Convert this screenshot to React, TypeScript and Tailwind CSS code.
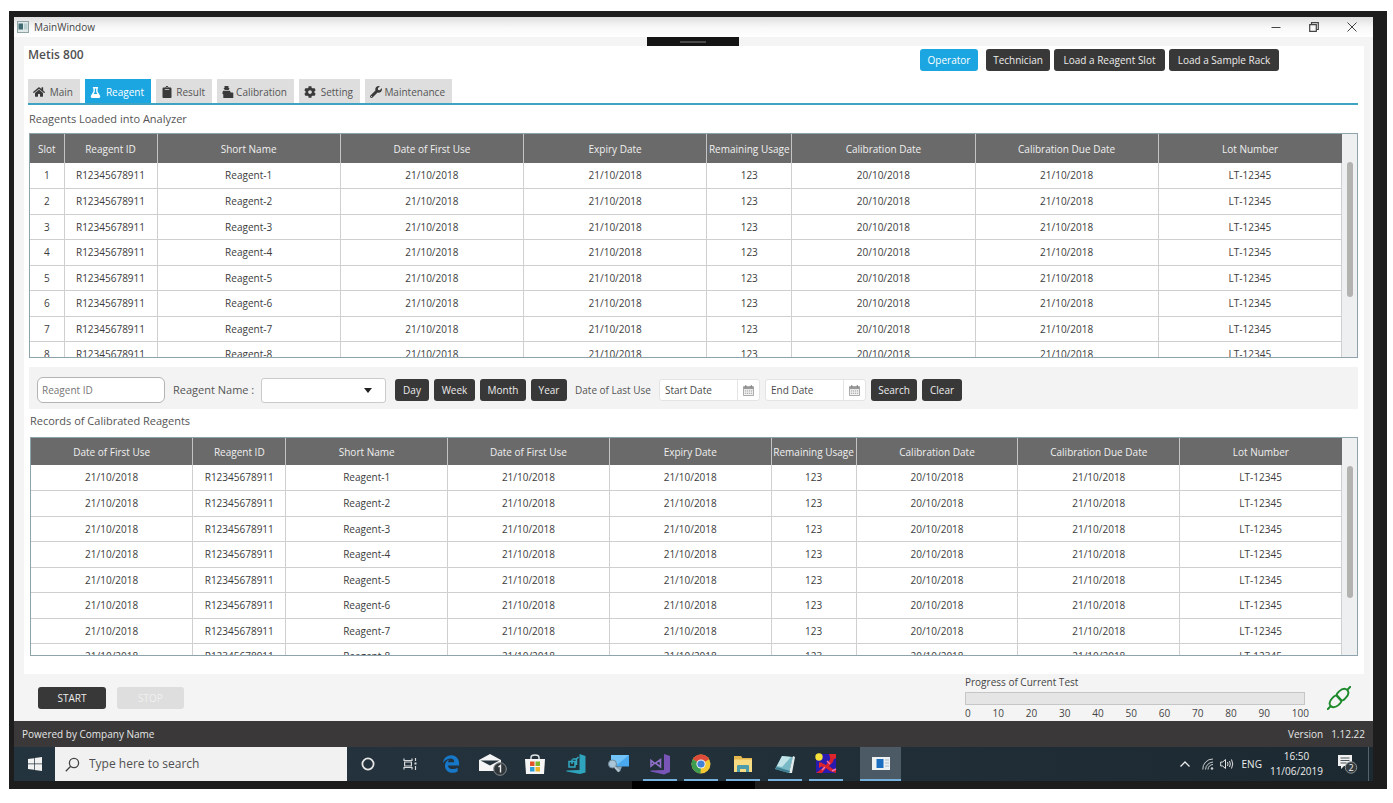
import type { ReactNode } from "react";
import { FaHome, FaFlask, FaClipboard, FaCog, FaWrench } from "react-icons/fa";
import { FaEdgeLegacy } from "react-icons/fa6";

const DARK_BUTTON =
  "flex h-[22px] items-center justify-center whitespace-nowrap rounded-[3px] bg-[#393838] text-[10px] font-medium text-[#ececec]";

const reagents = [1, 2, 3, 4, 5, 6, 7, 8].map((slot) => ({
  slot: String(slot),
  id: "R12345678911",
  name: `Reagent-${slot}`,
  firstUse: "21/10/2018",
  expiry: "21/10/2018",
  usage: "123",
  calibrated: "20/10/2018",
  due: "21/10/2018",
  lot: "LT-12345",
}));

type Column = { label: string; field: keyof (typeof reagents)[number]; width: string };

const commonColumns: Column[] = [
  { label: "Reagent ID", field: "id", width: "w-[93px]" },
  { label: "Short Name", field: "name", width: "w-auto" },
  { label: "Date of First Use", field: "firstUse", width: "w-auto" },
  { label: "Expiry Date", field: "expiry", width: "w-auto" },
  { label: "Remaining Usage", field: "usage", width: "w-[85px]" },
  { label: "Calibration Date", field: "calibrated", width: "w-auto" },
  { label: "Calibration Due Date", field: "due", width: "w-auto" },
  { label: "Lot Number", field: "lot", width: "w-auto" },
];

const loadedColumns: Column[] = [{ label: "Slot", field: "slot", width: "w-[34px]" }, ...commonColumns];
const recordColumns: Column[] = [{ label: "Date of First Use", field: "firstUse", width: "w-auto" }, ...commonColumns];

type GridProps = { columns: Column[]; height: string; headHeight: string; thumb: string; label: string };

function DataGrid({ columns, height, headHeight, thumb, label }: GridProps) {
  return (
    <div className={`flex border border-[#8fa3ad] ${height}`}>
      <div className="min-w-0 flex-1 overflow-y-auto [scrollbar-width:none]">
        <table aria-label={label} className="w-full table-fixed border-collapse text-center text-[10px] text-[#3c3c3c]">
          <colgroup>
            {columns.map((c, i) => (
              <col key={i} className={c.width} />
            ))}
          </colgroup>
          <thead>
            <tr className={`bg-[#6a6a6a] text-[#f0f0f0] ${headHeight}`}>
              {columns.map((c, i) => (
                <th key={i} className="whitespace-nowrap border-r border-[#c4c4c4] p-0 pt-px font-medium last:border-r-0">
                  {c.label}
                </th>
              ))}
            </tr>
          </thead>
          <tbody>
            {reagents.map((r) => (
              <tr key={r.slot} className="border-b border-[#cfcfcf] odd:h-[25px] even:h-[26px]">
                {columns.map((c, i) => (
                  <td key={i} className="border-r border-[#cfcfcf] p-0 pt-px">
                    {r[c.field]}
                  </td>
                ))}
              </tr>
            ))}
          </tbody>
        </table>
      </div>
      <div className="flex w-[15px] justify-center bg-[#eeeff0] pt-7">
        <div className={`w-1.5 rounded-full bg-[#b2b2b0] ${thumb}`} />
      </div>
    </div>
  );
}

function BalanceIcon() {
  return (
    <svg viewBox="0 0 12 14" className="h-3.5 w-3 fill-current">
      <path d="M2.500 1h4v2h1L6.800 5h-4L1.500 3h1z M1 5.800h7l.7 1.700h1.800q.8 0 .8.900V13H1.300V9.500L.3 8.500z" />
    </svg>
  );
}

const tabs: { label: string; icon: ReactNode; width: string }[] = [
  { label: "Main", icon: <FaHome className="size-3" />, width: "w-[52px]" },
  { label: "Reagent", icon: <FaFlask className="size-[11px]" />, width: "w-[66px]" },
  { label: "Result", icon: <FaClipboard className="size-3" />, width: "w-[56px]" },
  { label: "Calibration", icon: <BalanceIcon />, width: "w-[77px]" },
  { label: "Setting", icon: <FaCog className="size-3" />, width: "w-[61px]" },
  { label: "Maintenance", icon: <FaWrench className="size-3" />, width: "w-[87px]" },
];

function DateField({ label }: { label: string }) {
  return (
    <div className="flex h-[22px] w-[101px] rounded-[3px] border border-[#e4e4e4] bg-white">
      <input
        aria-label={label}
        placeholder={label}
        className="w-[78px] border-r border-[#e4e4e4] px-[5px] text-[10px] outline-none placeholder:text-[#4a4a4a]"
      />
      <button aria-label={`Pick ${label}`} className="flex flex-1 items-center justify-center">
        <svg viewBox="0 0 12 12" className="size-[11px]">
          <path d="M.5 2h11v9.500H.5z" fill="#f4f4f4" stroke="#a0a0a0" />
          <path d="M.5 1.500h11v3H.5z" fill="#999" />
          <path d="M3 0v2.500M9 0v2.500" stroke="#777" />
          <path d="M2 6.500h8M2 9h8" stroke="#909090" strokeDasharray="1.400 .8" />
        </svg>
      </button>
    </div>
  );
}

function TitleBar() {
  return (
    <div className="flex h-5 items-center bg-linear-to-b from-[#dedede] via-[#f8f8f8] to-white pl-[3px] pr-4">
      <svg viewBox="0 0 12 12" className="size-3">
        <rect x=".5" y=".5" width="11" height="11" fill="#dfe9ea" stroke="#8fa5a5" />
        <rect x="1.500" y="2.500" width="4.500" height="6" fill="#3f6a72" />
        <rect x="7" y="2.500" width="3.500" height="6" fill="#b9cfd0" />
      </svg>
      <h1 className="ml-[5px] flex-1 text-[10px] font-medium text-[#444]">MainWindow</h1>
      <div className="flex gap-7 text-[#444]">
        <button aria-label="Minimize">
          <svg viewBox="0 0 10 10" className="size-2.5" fill="none" stroke="currentColor">
            <path d="M.5 5.500h9" />
          </svg>
        </button>
        <button aria-label="Restore">
          <svg viewBox="0 0 10 10" className="size-2.5" fill="none" stroke="currentColor" strokeWidth="1.200">
            <path d="M.7 2.700h6.600v6.600H.7zM2.500 2.500V.7h6.800v6.800H7.500" />
          </svg>
        </button>
        <button aria-label="Close">
          <svg viewBox="0 0 10 10" className="size-2.5" fill="none" stroke="currentColor">
            <path d="M.5.5l9 9M9.500.5l-9 9" />
          </svg>
        </button>
      </div>
    </div>
  );
}

function Header() {
  return (
    <header className="flex pt-[3px]">
      <h2 className="flex-1 text-xs leading-3 font-semibold text-[#505050]">Metis 800</h2>
      <div className="mr-[79px] flex gap-1">
        <button className="mr-1 flex h-[22px] w-[58px] items-center justify-center rounded-[3px] bg-[#1ba6e2] text-[10px] font-medium text-white">
          Operator
        </button>
        <button className={`${DARK_BUTTON} w-16`}>Technician</button>
        <button className={`${DARK_BUTTON} w-[111px]`}>Load a Reagent Slot</button>
        <button className={`${DARK_BUTTON} w-[110px]`}>Load a Sample Rack</button>
      </div>
    </header>
  );
}

function Tabs() {
  return (
    <nav className="mt-2 flex gap-[5px] border-b-2 border-[#3fa3c4]">
      {tabs.map((t) => (
        <button
          key={t.label}
          className={`flex h-6 items-center justify-between whitespace-nowrap pt-0.5 pr-[7px] pl-[5px] text-[10px] ${t.width} ${
            t.label === "Reagent" ? "bg-[#1ba6e2] text-white" : "bg-[#dedede] text-[#3a3a3a]"
          }`}
        >
          {t.icon}
          <span className={t.label === "Reagent" ? "text-white" : "text-[#555]"}>{t.label}</span>
        </button>
      ))}
    </nav>
  );
}

function FilterBar() {
  return (
    <div className="mt-[9px] flex h-[42px] items-center bg-[#f3f3f3] pt-1 pl-2">
      <input
        aria-label="Reagent ID"
        placeholder="Reagent ID"
        className="h-[26px] w-32 rounded-md border border-[#b4b4b4] bg-white px-1 text-[10px] outline-none placeholder:text-[#777]"
      />
      <label htmlFor="reagent-name" className="ml-2 w-[88px] whitespace-nowrap text-[11px] text-[#555]">
        Reagent Name :
      </label>
      <div className="relative">
        <select
          id="reagent-name"
          className="block h-[25px] w-[125px] appearance-none rounded-[3px] border border-[#cacaca] bg-white px-2 text-[10px] text-[#444]"
        >
          <option value="" />
          {reagents.map((r) => (
            <option key={r.slot}>{r.name}</option>
          ))}
        </select>
        <svg viewBox="0 0 8 5" className="pointer-events-none absolute top-2.5 right-3.5 h-[5px] w-2">
          <path d="M0 0h8L4 5z" fill="#222" />
        </svg>
      </div>
      <div className="ml-[9px] flex gap-[5px]">
        <button className={`${DARK_BUTTON} w-[34px]`}>Day</button>
        <button className={`${DARK_BUTTON} w-[41px]`}>Week</button>
        <button className={`${DARK_BUTTON} w-[46px]`}>Month</button>
        <button className={`${DARK_BUTTON} w-9`}>Year</button>
      </div>
      <span className="ml-2 w-[84px] whitespace-nowrap text-[10px] text-[#555]">Date of Last Use</span>
      <div className="flex gap-[5px]">
        <DateField label="Start Date" />
        <DateField label="End Date" />
        <button className={`${DARK_BUTTON} w-[46px]`}>Search</button>
        <button className={`${DARK_BUTTON} w-10`}>Clear</button>
      </div>
    </div>
  );
}

function TestControls() {
  return (
    <div className="flex h-[47px] pr-[22px] pl-6">
      <div className="flex flex-1 gap-[11px] pt-[13px]">
        <button className={`${DARK_BUTTON} w-[68px]`}>START</button>
        <button
          disabled
          className="h-[22px] w-[67px] rounded-[3px] bg-[#dedede] text-[10px] font-medium text-[#f0f0f0]"
        >
          STOP
        </button>
      </div>
      <div className="mr-[18px] w-[344px] text-[10px] text-[#444]">
        <div id="progress-label" className="h-[18px] leading-[16px]">
          Progress of Current Test
        </div>
        <div
          role="progressbar"
          aria-labelledby="progress-label"
          aria-valuenow={0}
          className="mr-1 h-[13px] border border-[#c6c6c6] bg-[#e5e5e5]"
        />
        <div className="flex justify-between leading-4">
          {[0, 10, 20, 30, 40, 50, 60, 70, 80, 90, 100].map((n) => (
            <span key={n}>{n}</span>
          ))}
        </div>
      </div>
      <svg viewBox="0 0 24 24" className="mt-3 size-6" fill="none" stroke="#1d8a2c" strokeWidth="1.900">
        <path d="M0 24l3.800-4M20.200 4L24 0" />
        <path d="M5.500 11.800C7.500 9.300 9.500 8.900 10.800 10.200l3 3.400c1 1.400.4 3.200-1.800 5-3 2.700-6.200 3.400-8.200 1.400s-1.200-5.200 1.700-8.200z" />
        <path d="M18.500 12.200c-2 2.500-4 2.900-5.300 1.600l-3-3.400c-1-1.400-.4-3.200 1.800-5 3-2.700 6.200-3.400 8.200-1.400s1.200 5.200-1.700 8.200z" />
      </svg>
    </div>
  );
}

const MailIcon = () => (
  <svg viewBox="0 0 30 24" className="h-6 w-[30px]">
    <path d="M1 8L12 2l11 6v11H1z" fill="#f5f5f5" />
    <path d="M2.500 8.500h19L12 13.500z" fill="#25343c" />
    <circle cx="22" cy="17" r="6.300" fill="#30373a" stroke="#8b8f90" />
    <path d="M20.500 15l2-1.500V20.500" fill="none" stroke="#eee" strokeWidth="1.400" />
  </svg>
);

const StoreIcon = () => (
  <svg viewBox="0 0 22 22" className="size-[22px]">
    <path d="M7 7V4.500q0-2.500 4-2.500t4 2.500V7" fill="none" stroke="#dfe3e4" strokeWidth="1.500" />
    <path d="M1 6h20l-1 15H2z" fill="#f6f6f6" />
    <path d="M6 8.500h4.500V13H6z" fill="#e0532c" />
    <path d="M11.500 8.500H16V13h-4.500z" fill="#7fb52d" />
    <path d="M6 14h4.500v4.500H6z" fill="#2d9fd8" />
    <path d="M11.500 14H16v4.500h-4.500z" fill="#f0b526" />
  </svg>
);

const BlendIcon = () => (
  <svg viewBox="0 0 22 22" className="size-[22px]">
    <path d="M14.500 1l6 2v16.500l-5.500 1.500L1.500 18.500v-1l13-.5z" fill="#2fa5bd" />
    <path d="M4 8.500h6v5.500H4zM7 11V6.500M11.500 12V6h-4M11.500 6l2-2" fill="none" stroke="#32a9c1" strokeWidth="1.500" />
  </svg>
);

const RemoteIcon = () => (
  <svg viewBox="0 0 22 22" className="size-[22px]">
    <path d="M4 2h18v11.500H4z" fill="#49a8ee" />
    <path d="M4 2h18L8 13.500H4z" fill="#72c3f7" />
    <path d="M10 13.500h5l-2 5h-2z" fill="#8aa7b8" />
    <circle cx="5.500" cy="11" r="4" fill="#a9c6d8" stroke="#70899a" />
    <path d="M8 14l4 4.500" stroke="#b6c6cf" strokeWidth="2.400" />
  </svg>
);

const StudioIcon = () => (
  <svg viewBox="0 0 22 22" className="size-[22px]">
    <path d="M15 1l6 2v16l-6 2.500L1.500 18.500v-1l13.500-.5z" fill="#7a55b8" />
    <path d="M2 7.500v5.500l3.500-2.700zM6.500 10.200l5-3.700v7.500z" fill="none" stroke="#8f70c6" strokeWidth="1.600" />
  </svg>
);

const ChromeIcon = () => (
  <svg viewBox="0 0 20 20" className="size-5">
    <circle cx="10" cy="10" r="9.500" fill="#f3c832" />
    <path d="M10 10L1.800 5.200a9.500 9.500 0 0 1 16.400 0z" fill="#dd4b3b" />
    <path d="M10 10L1.800 5.200A9.500 9.500 0 0 0 9.500 19.500z" fill="#3d9c50" />
    <circle cx="10" cy="10" r="4.600" fill="#f2f2f2" />
    <circle cx="10" cy="10" r="3.600" fill="#4380d8" />
  </svg>
);

const FolderIcon = () => (
  <svg viewBox="0 0 20 18" className="h-[18px] w-5">
    <path d="M1 1h7l1.500 2H19v14H1z" fill="#e5b64b" />
    <path d="M1 4.500h18V17H1z" fill="#f7dc83" />
    <path d="M4 17v-6q0-1 1-1h10q1 0 1 1v6h-3v-3H7v3z" fill="#4d9cab" />
  </svg>
);

const NotepadIcon = () => (
  <svg viewBox="0 0 22 20" className="h-5 w-[22px]">
    <path d="M8 2l11 1-4 16L1 15z" fill="#79b9c6" />
    <path d="M8 2l9 1-9 10-5-1z" fill="#c2e3e7" />
    <path d="M19 2l2 1-3 16h-3z" fill="#e3eced" />
    <path d="M1 15l14 4 1-2L3 13z" fill="#3e7f90" />
  </svg>
);

const LabAppIcon = () => (
  <svg viewBox="0 0 22 22" className="size-[22px]">
    <path d="M1 1h20v19H1z" fill="#2a1bb0" />
    <path d="M14 1h7v4l-5 3zM4 9l5 3-5 3z" fill="#e0262c" />
    <circle cx="4" cy="4" r="3.700" fill="#f5e13a" />
    <path d="M1 20l7-5-3-6 6 3 5-7 3-1-1 5-4 4 4 3 3 1v3l-6-2-4-3-4 5z" fill="#d9222c" />
    <path d="M12 8l3 3M7 17l3-3M17 18l4-2" stroke="#ee72b4" strokeWidth="1.400" />
  </svg>
);

const taskItems: { name: string; running: boolean; icon: ReactNode }[] = [
  {
    name: "Cortana",
    running: false,
    icon: (
      <svg viewBox="0 0 14 14" className="size-3.5">
        <circle cx="7" cy="7" r="5.600" fill="none" stroke="#e6e6e6" strokeWidth="1.800" />
      </svg>
    ),
  },
  {
    name: "Task View",
    running: false,
    icon: (
      <svg viewBox="0 0 14 14" className="size-3.5" fill="none" stroke="#d6dadb" strokeWidth="1.200">
        <path d="M1 1.500v2h8v-2M1 12.500v-2h8v2M1.600 5h6.800v4H1.600zM12.500 1v3M12.500 9v4" />
        <path d="M11.500 5.500h2v2h-2z" fill="#d6dadb" stroke="none" />
      </svg>
    ),
  },
  { name: "Edge", running: false, icon: <FaEdgeLegacy className="size-[18px] text-[#1777c8]" /> },
  { name: "Mail", running: false, icon: <MailIcon /> },
  { name: "Store", running: false, icon: <StoreIcon /> },
  { name: "Blend", running: false, icon: <BlendIcon /> },
  { name: "Remote Desktop", running: false, icon: <RemoteIcon /> },
  { name: "Visual Studio", running: true, icon: <StudioIcon /> },
  { name: "Chrome", running: true, icon: <ChromeIcon /> },
  { name: "File Explorer", running: true, icon: <FolderIcon /> },
  { name: "Notepad", running: true, icon: <NotepadIcon /> },
  { name: "Lab App", running: true, icon: <LabAppIcon /> },
];

function Taskbar() {
  return (
    <footer className="flex h-[34px] bg-linear-to-r from-[#24343e] via-[#22303a] to-[#1c2931]">
      <button aria-label="Start" className="flex w-[41px] items-center justify-center">
        <svg viewBox="0 0 14 14" className="size-3.5" fill="#f2f2f2">
          <path d="M0 2l6-.8v5.400H0zM6.700 1.100L14 0v6.600H6.700zM0 7.300h6v5.500L0 12zM6.700 7.300H14V14l-7.300-1.100z" />
        </svg>
      </button>
      <label className="flex w-[292px] items-center bg-[#f1f1f1] pl-2.5">
        <svg viewBox="0 0 15 15" className="size-[15px]" fill="none" stroke="#444" strokeWidth="1.300">
          <circle cx="9" cy="6" r="4.600" />
          <path d="M5.700 9.300L.8 14.200" />
        </svg>
        <input
          aria-label="Type here to search"
          placeholder="Type here to search"
          className="ml-[9px] w-60 bg-transparent text-xs outline-none placeholder:text-[#505050]"
        />
      </label>
      <div className="flex w-[500px]">
        {taskItems.map((t) => (
          <button key={t.name} aria-label={t.name} className="flex min-w-0 flex-1 flex-col items-center">
            <span className="flex flex-1 items-center">{t.icon}</span>
            {t.running && <span className="-mt-0.5 h-0.5 w-[34px] bg-[#76b0dc]" />}
          </button>
        ))}
      </div>
      <button
        aria-label="MainWindow"
        className="ml-[13px] flex w-[41px] items-center justify-center border-b-2 border-[#76b0dc] bg-[#4b5a64]"
      >
        <svg viewBox="0 0 18 13" className="h-[13px] w-[18px]">
          <path d="M0 0h18v13H0z" fill="#eef1f2" />
          <path d="M4.500 2h7v9h-7z" fill="#1c6fc0" />
          <path d="M13 3h4M13 6h4M13 9h4" stroke="#a9bccb" />
        </svg>
      </button>
      <div className="ml-auto flex items-center text-[10px] text-[#ececec]">
        <button aria-label="Show hidden icons">
          <svg viewBox="0 0 10 6" className="h-1.5 w-2.5" fill="none" stroke="currentColor" strokeWidth="1.300">
            <path d="M.5 5.500L5 1l4.500 4.500" />
          </svg>
        </button>
        <svg viewBox="0 0 12 12" className="ml-3 size-3" fill="none" stroke="#c9cdcf">
          <path d="M.8 11.500A10 10 0 0 1 11 1M3.500 11.500A8 8 0 0 1 11 4M6 11.500a5 5 0 0 1 5-5" />
          <circle cx="10" cy="10.500" r="1.300" fill="#c9cdcf" stroke="none" />
        </svg>
        <svg viewBox="0 0 14 12" className="ml-1.5 h-3 w-3.5" fill="none" stroke="#e0e0e0">
          <path d="M.7 4v4h2L5.500 10.500v-9L2.700 4zM7.500 4q1 2 0 4M9.500 3q1.700 3 0 6M11.500 1.500q2.500 4.500 0 9" />
        </svg>
        <span className="ml-2">ENG</span>
        <div className="ml-2 text-center leading-[15px]">
          <div>16:50</div>
          <div>11/06/2019</div>
        </div>
        <button aria-label="Notifications" className="ml-3.5 flex">
          <svg viewBox="0 0 21 20" className="h-5 w-[21px]">
            <path d="M1 1h14v11H7l-3 3v-3H1z" fill="#f0f0f0" />
            <path d="M3.500 4h9M3.500 6.500h9M3.500 9h6" stroke="#4c565c" />
            <circle cx="14" cy="13.500" r="5.700" fill="#343b3f" stroke="#8b9194" />
            <text x="14" y="16.800" textAnchor="middle" fontSize="9" fill="#f2f2f2">
              2
            </text>
          </svg>
        </button>
        <span className="mr-1 ml-2.5 h-[34px] w-px bg-[#53626b]" />
      </div>
    </footer>
  );
}

export default function App() {
  return (
    <div className="bg-white pt-[11px] pr-1.5 pb-[14px] pl-[9px] font-['Open_Sans','Noto_Sans',sans-serif]">
      <div className="bg-[#1d1d1d] pt-1.5 pr-[14px] pl-[5px]">
        <div className="bg-[#f4f4f4]">
          <TitleBar />
          <div className="relative h-[9px]">
            <div className="absolute top-0 left-[633px] flex h-[9px] w-[92px] items-center justify-center bg-[#151515]">
              <div className="h-0.5 w-[26px] bg-[#4a4a4a]" />
            </div>
          </div>
          <main className="mr-[9px] ml-2.5 bg-white pr-1.5 pb-[18px] pl-1">
            <Header />
            <Tabs />
            <h3 className="h-7 pl-px text-[11px] leading-7 text-[#555]">Reagents Loaded into Analyzer</h3>
            <div className="pl-px">
              <DataGrid
                label="Reagents Loaded into Analyzer"
                columns={loadedColumns}
                height="h-[225px]"
                headHeight="h-[29px]"
                thumb="h-[135px]"
              />
              <FilterBar />
            </div>
            <div className="pl-0.5">
              <h3 className="h-7 text-[11px] leading-6 text-[#555]">Records of Calibrated Reagents</h3>
              <DataGrid
                label="Records of Calibrated Reagents"
                columns={recordColumns}
                height="h-[219px]"
                headHeight="h-[27px]"
                thumb="h-[132px]"
              />
            </div>
          </main>
          <TestControls />
          <div className="flex h-[26px] items-center justify-between bg-[#3a3838] pt-px pr-2 pl-2 text-[10px] font-medium text-[#e6e6e6]">
            <span>Powered by Company Name</span>
            <span className="flex gap-2">
              <span>Version</span>
              <span>1.12.22</span>
            </span>
          </div>
        </div>
        <Taskbar />
        <div className="flex h-2 justify-center">
          <div className="h-2 w-[123px] bg-black" />
        </div>
      </div>
    </div>
  );
}
